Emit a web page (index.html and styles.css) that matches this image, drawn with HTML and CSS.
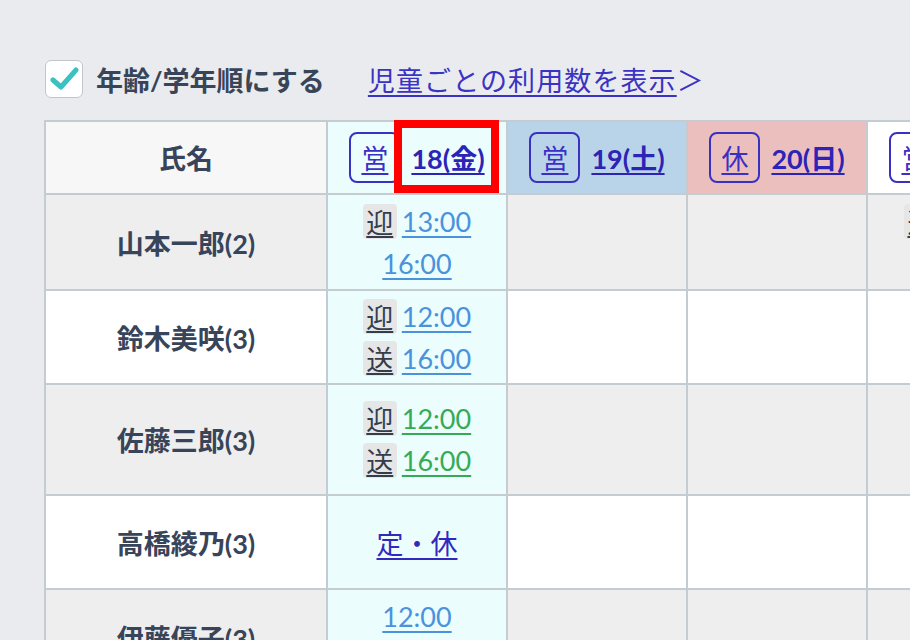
FILE: index.html
```html
<!DOCTYPE html>
<html lang="ja">
<head>
<meta charset="utf-8">
<title>利用予定</title>
<link rel="stylesheet" href="styles.css">
</head>
<body>
<div class="toolbar">
  <label class="check">
    <span class="box">
      <svg width="30" height="26" viewBox="0 0 30 26"><path d="M4 14 L12 21 L27 4" fill="none" stroke="#3cc1c3" stroke-width="5" stroke-linecap="round" stroke-linejoin="round"/></svg>
    </span>
    <span class="check-text">年齢/学年順にする</span>
  </label>
  <a class="count-link" href="#"><span class="u">児童ごとの利用数を表示</span><span class="gt">＞</span></a>
</div>

<table class="sched">
  <colgroup>
    <col class="c-name"><col class="c-day"><col class="c-day"><col class="c-day"><col class="c-day">
  </colgroup>
  <thead>
    <tr class="hrow">
      <th class="h-name">氏名</th>
      <th class="h-day today">
        <div class="hd"><span class="kind"><u>営</u></span><a class="dlink" href="#">18(金)</a><span class="mark"></span></div>
      </th>
      <th class="h-day sat">
        <div class="hd"><span class="kind"><u>営</u></span><a class="dlink" href="#">19(土)</a></div>
      </th>
      <th class="h-day sun">
        <div class="hd"><span class="kind"><u>休</u></span><a class="dlink" href="#">20(日)</a></div>
      </th>
      <th class="h-day">
        <div class="hd"><span class="kind"><u>営</u></span><a class="dlink" href="#">21(月)</a></div>
      </th>
    </tr>
  </thead>
  <tbody>
    <tr class="r1 odd">
      <td class="name">山本一郎(2)</td>
      <td class="today"><div class="ln"><span class="tag"><u>迎</u></span><a class="t blue" href="#">13:00</a></div><div class="ln"><a class="t blue" href="#">16:00</a></div></td>
      <td></td><td></td>
      <td class="cut"><div class="ln"><span class="tag"><u>迎</u></span><a class="t blue" href="#">13:00</a></div><div class="ln"></div></td>
    </tr>
    <tr class="r2">
      <td class="name">鈴木美咲(3)</td>
      <td class="today"><div class="ln"><span class="tag"><u>迎</u></span><a class="t blue" href="#">12:00</a></div><div class="ln"><span class="tag"><u>送</u></span><a class="t blue" href="#">16:00</a></div></td>
      <td></td><td></td><td></td>
    </tr>
    <tr class="r3 odd">
      <td class="name">佐藤三郎(3)</td>
      <td class="today"><div class="ln"><span class="tag"><u>迎</u></span><a class="t green" href="#">12:00</a></div><div class="ln"><span class="tag"><u>送</u></span><a class="t green" href="#">16:00</a></div></td>
      <td></td><td></td><td></td>
    </tr>
    <tr class="r4">
      <td class="name">高橋綾乃(3)</td>
      <td class="today"><div class="ln"><a class="off" href="#">定・休</a></div></td>
      <td></td><td></td><td></td>
    </tr>
    <tr class="r5 odd">
      <td class="name">伊藤優子(3)</td>
      <td class="today"><div class="ln"><a class="t blue" href="#">12:00</a></div><div class="ln"><a class="t blue" href="#">16:00</a></div></td>
      <td></td><td></td><td></td>
    </tr>
  </tbody>
</table>
</body>
</html>
```
FILE: styles.css
```css
html, body {
  margin: 0;
  padding: 0;
}
body {
  background: #eaebef;
  width: 910px;
  height: 640px;
  overflow: hidden;
  font-family: Lato, "Noto Sans CJK JP", sans-serif;
  font-size: 27px;
  color: #37445a;
}
.toolbar {
  display: flex;
  align-items: center;
  padding: 60px 0 0 45px;
  height: 38px;
}
.check {
  display: flex;
  align-items: center;
}
.box {
  width: 36px;
  height: 36px;
  border: 1px solid #bfc6cd;
  border-radius: 6px;
  background: #fff;
  display: flex;
  align-items: center;
  justify-content: center;
}
.check-text {
  margin-left: 13px;
  font-weight: bold;
  color: #384559;
}
.count-link {
  margin-left: 43px;
  color: #3a33c3;
  text-decoration: none;
  font-family: "Noto Sans CJK JP", sans-serif;
  letter-spacing: 1.1px;
}
.count-link .u {
  text-decoration: underline;
  text-underline-offset: 4px;
  text-decoration-thickness: 2px;
}
.count-link .gt {
  letter-spacing: 0;
}

.sched {
  margin: 22px 0 0 44px;
  border-collapse: separate;
  border-spacing: 0;
  table-layout: fixed;
  width: 1004px;
}
.c-name { width: 284px; }
.c-day { width: 180px; }
.sched th, .sched td {
  box-sizing: border-box;
  border-right: 2px solid #c4ccd2;
  border-bottom: 2px solid #c4ccd2;
  padding: 0;
  text-align: center;
  vertical-align: middle;
  background: #fff;
}
.sched th:first-child, .sched td:first-child {
  border-left: 2px solid #c4ccd2;
}
.sched th {
  border-top: 2px solid #c4ccd2;
}
.hrow { height: 75px; }
.r1 { height: 96px; }
.r2 { height: 94px; }
.r3 { height: 111px; }
.r4 { height: 94px; }
.r5 { height: 96px; }

.sched tr.odd td { background: #eeeeee; }
.sched .h-name { background: #f7f7f7; font-weight: bold; color: #37445a; }
.sched .today, .sched tr.odd td.today { background: #ebfdfd; }
.sched .sat { background: #b9d4e8; }
.sched .sun { background: #ecbfbf; }

.hd {
  position: relative;
  display: flex;
  align-items: center;
  justify-content: center;
  gap: 11px;
}
.kind {
  box-sizing: border-box;
  width: 51px;
  height: 51px;
  border: 2px solid #3b30c4;
  border-radius: 8px;
  display: flex;
  align-items: center;
  justify-content: center;
  color: #3b30c4;
  font-weight: normal;
}
.kind u {
  text-underline-offset: 4px;
}
.dlink {
  color: #2d23b6;
  font-weight: bold;
  text-decoration: underline;
  text-underline-offset: 4px;
  text-decoration-thickness: 2px;
}
.mark {
  position: absolute;
  left: 66px;
  top: -12px;
  width: 105px;
  height: 73px;
  box-sizing: border-box;
  border: 8px solid #ff0000;
}

.name {
  font-weight: bold;
  color: #37445a;
}
.ln {
  height: 42px;
  display: flex;
  align-items: center;
  justify-content: center;
}
.tag {
  box-sizing: border-box;
  width: 34px;
  height: 35px;
  background: #e6e6e6;
  border-radius: 4px;
  display: flex;
  align-items: center;
  justify-content: center;
  margin-right: 5px;
  color: #333d4c;
}
.tag u {
  text-underline-offset: 3px;
}
.t {
  text-decoration: underline;
  text-decoration-thickness: 2px;
  text-underline-offset: 4px;
}
.blue { color: #4a92dc; }
.green { color: #37aa55; }
.off {
  color: #3328bd;
  text-decoration: underline;
  text-decoration-thickness: 2px;
  text-underline-offset: 4px;
}
.cut .ln { justify-content: flex-start; padding-left: 36px; }
```
